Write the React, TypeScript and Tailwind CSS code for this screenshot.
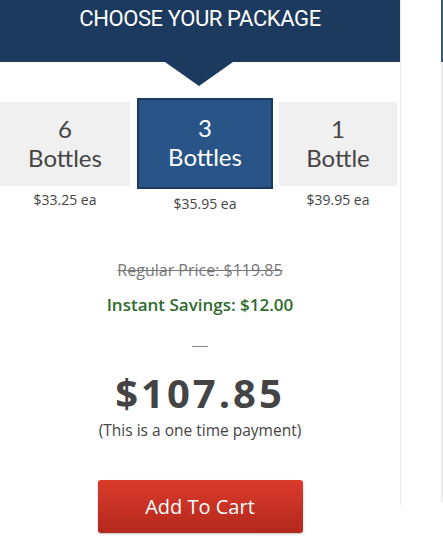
export default function App() {
  const packs = [
    { qty: "6", label: "Bottles", price: "$33.25", selected: false, w: "w-[130px]" },
    { qty: "3", label: "Bottles", price: "$35.95", selected: true, w: "w-[136px]" },
    { qty: "1", label: "Bottle", price: "$39.95", selected: false, w: "w-[118px]" },
  ]

  return (
    <div className="flex w-[443px] h-[543px] bg-white overflow-hidden font-['Open_Sans',sans-serif]">
      {/* Package column */}
      <div className="w-[400px] shrink-0 flex flex-col items-center">
        <div className="w-full h-[62px] bg-[#1c3a5e] flex justify-center pt-[5px]">
          <h2 className="font-['Roboto',sans-serif] text-[22px] leading-[28px] tracking-[-0.4px] text-white uppercase">
            Choose Your Package
          </h2>
        </div>
        <div className="w-0 h-0 border-l-[34px] border-r-[34px] border-t-[24px] border-l-transparent border-r-transparent border-t-[#1c3a5e] -ml-[2px]" />

        {/* Package cards */}
        <div className="w-full flex items-start mt-[12px]">
          {packs.map((p, i) => (
            <div key={i} className={`${p.w} flex flex-col items-center ${i === 1 ? "mr-[6px] ml-[7px]" : ""}`}>
              {p.selected ? (
                <div className="w-full h-[91px] bg-[#285487] border-2 border-[#1b3a5e] flex items-center justify-center text-white">
                  <p className="font-['Lato',sans-serif] text-[24px] leading-[29px] text-center pb-[3px]">
                    {p.qty}
                    <br />
                    {p.label}
                  </p>
                </div>
              ) : (
                <div className="w-full h-[84px] mt-[4px] bg-[#f0f0f0] flex items-center justify-center text-[#444]">
                  <p className="font-['Lato',sans-serif] text-[24px] leading-[29px] text-center pb-[3px]">
                    {p.qty}
                    <br />
                    {p.label}
                  </p>
                </div>
              )}
              <p className={`text-[14px] leading-[20px] text-[#444] ${p.selected ? "mt-[5px]" : "mt-[4px]"}`}>
                {p.price} <span>ea</span>
              </p>
            </div>
          ))}
        </div>

        {/* Pricing summary */}
        <p className="mt-[46px] text-[16px] leading-[20px] text-[#777] line-through">Regular Price: $119.85</p>
        <p className="mt-[14px] text-[17px] leading-[22px] font-semibold text-[#2e6b2f]">Instant Savings: $12.00</p>
        <div className="mt-[30px] w-[16px] h-[1px] bg-[#888]" />
        <p className="mt-[22px] text-[40px] leading-[48px] font-bold tracking-[3px] text-[#444]">$107.85</p>
        <p className="mt-[3px] text-[15.5px] leading-[20px] text-[#444]">(This is a one time payment)</p>
        <button className="mt-[40px] w-[205px] h-[53px] rounded-[3px] bg-gradient-to-b from-[#da3b2b] to-[#b3281d] text-white text-[20px] shadow-[0_1px_2px_rgba(0,0,0,0.25)]">
          Add To Cart
        </button>
      </div>

      {/* Side strip */}
      <div className="flex-1 flex">
        <div className="w-[1px] bg-[#e9e9e9] h-[505px]" />
        <div className="flex-1" />
        <div className="w-[2px] flex flex-col">
          <div className="h-[62px] bg-[#3a5a80]" />
          <div className="h-[440px] bg-[#ececec]" />
        </div>
      </div>
    </div>
  )
}
